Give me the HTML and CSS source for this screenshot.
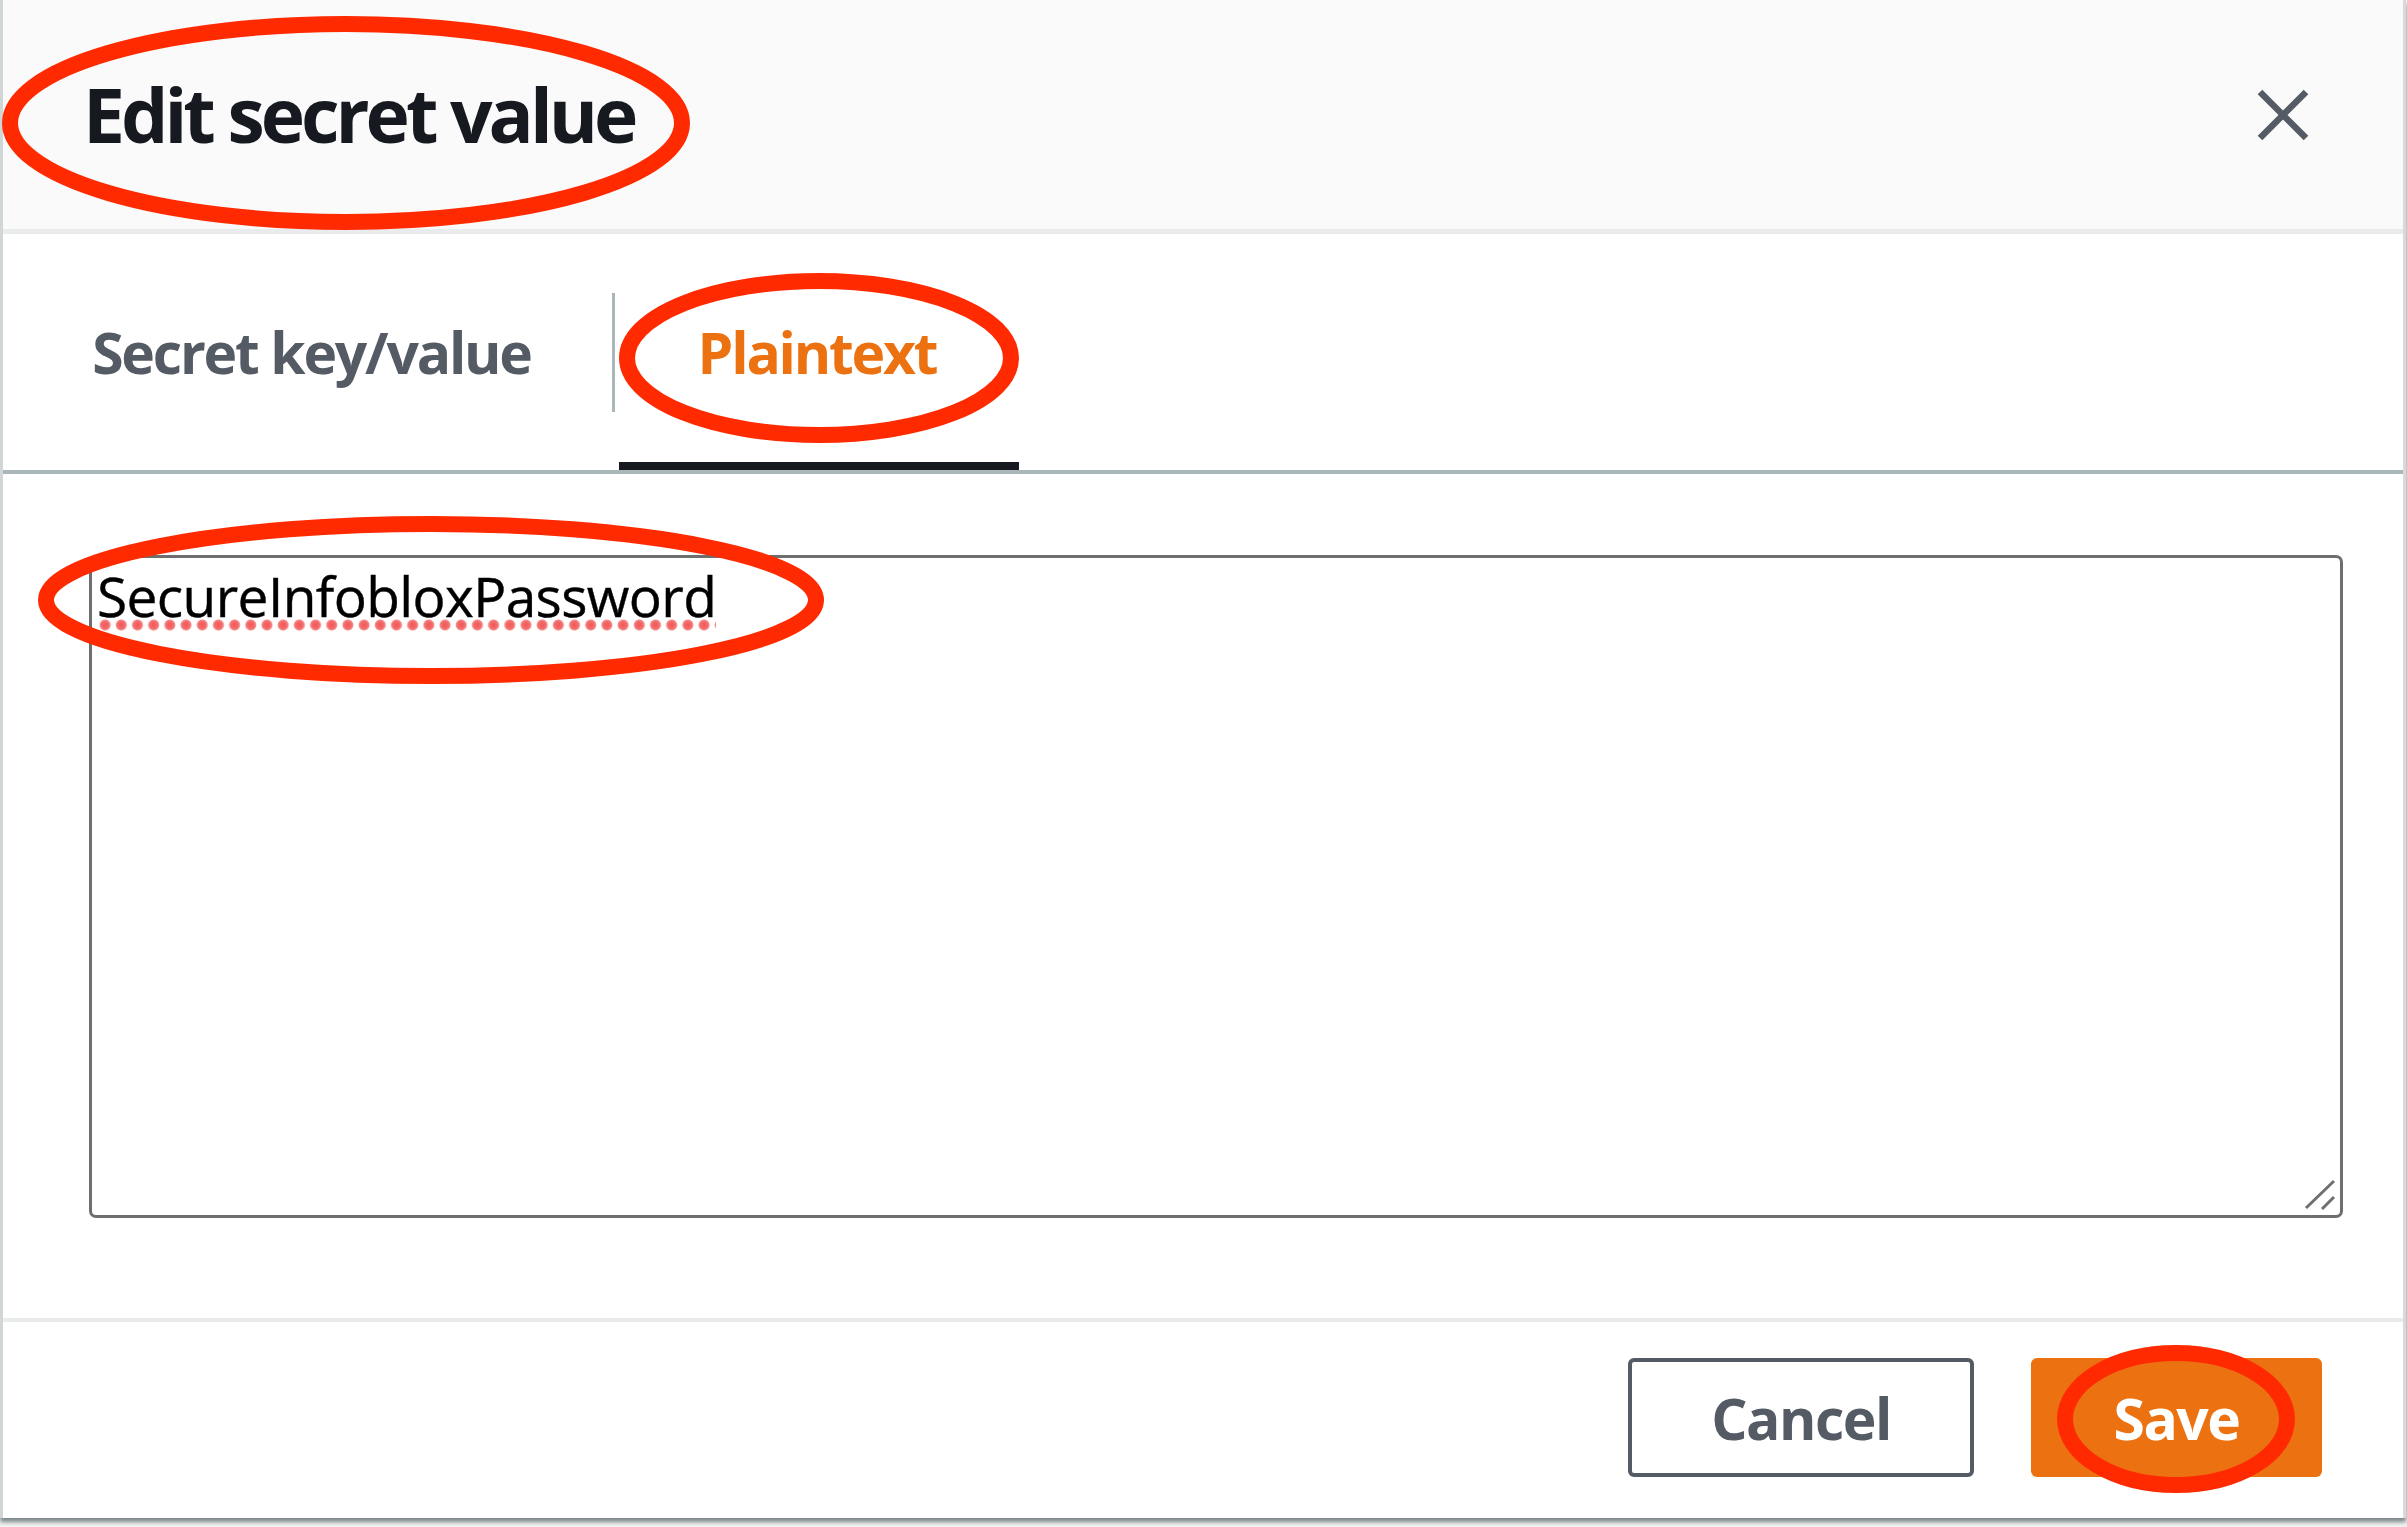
FILE: index.html
```html
<!DOCTYPE html>
<html lang="en">
<head>
<meta charset="utf-8">
<title>Edit secret value</title>
<link rel="stylesheet" href="styles.css">
</head>
<body>
<div class="dialog">
  <div class="header">
    <h2 class="title">Edit secret value</h2>
    <button class="close" aria-label="Close">
      <svg width="52" height="52" viewBox="0 0 52 52"><path d="M3 3 L49 49 M49 3 L3 49" stroke="#545b64" stroke-width="6.5" fill="none"/></svg>
    </button>
  </div>
  <div class="tabs">
    <div class="tab tab-kv">Secret key/value</div>
    <div class="tab-sep"></div>
    <div class="tab tab-plain active">Plaintext</div>
  </div>
  <div class="content">
    <div class="textarea">
      <span class="misspelled">SecureInfobloxPassword</span>
      <svg class="grip" width="32" height="32" viewBox="0 0 32 32"><path d="M2 29 L30 2 M18 30 L30 18" stroke="#707070" stroke-width="3" fill="none"/></svg>
    </div>
  </div>
  <div class="footer">
    <button class="btn btn-cancel">Cancel</button>
    <button class="btn btn-save">Save</button>
  </div>
</div>
<svg class="annotations" width="2407" height="1527" viewBox="0 0 2407 1527">
  <ellipse cx="346" cy="123" rx="336" ry="99"/>
  <ellipse cx="819" cy="358" rx="192" ry="77"/>
  <ellipse cx="431" cy="600" rx="385" ry="76"/>
  <ellipse cx="2176" cy="1419" rx="111" ry="66"/>
</svg>
</body>
</html>
```
FILE: styles.css
```css
html, body {
  margin: 0;
  padding: 0;
}
body {
  background: #f2f3f3;
  font-family: "Open Sans", "Noto Sans", sans-serif;
  width: 2407px;
  height: 1527px;
  position: relative;
  overflow: hidden;
}
.dialog {
  width: 2400px;
  background: #ffffff;
  border-left: 3px solid #d0d6d6;
  border-right: 3px solid #d5dbdb;
  box-shadow: 0 4px 4px rgba(84, 100, 102, 0.75);
  display: flex;
  flex-direction: column;
}
.header {
  height: 229px;
  background: #fafafa;
  border-bottom: 5px solid #e9ebed;
  display: flex;
  align-items: center;
  justify-content: space-between;
  padding: 0 94px 0 80px;
}
.title {
  margin: 0;
  font-size: 75px;
  font-weight: 700;
  color: #16191f;
  letter-spacing: -4px;
  line-height: 1;
}
.close {
  border: 0;
  background: transparent;
  padding: 0;
  width: 52px;
  height: 52px;
  display: flex;
}
.tabs {
  height: 236px;
  border-bottom: 4px solid #aab7b8;
  display: flex;
  align-items: center;
  padding-left: 8px;
}
.tab {
  height: 100%;
  display: flex;
  align-items: center;
  justify-content: center;
  font-size: 57px;
  font-weight: 700;
  letter-spacing: -2.2px;
  color: #545b64;
  position: relative;
  box-sizing: border-box;
}
.tab-kv {
  width: 601px;
}
.tab-sep {
  width: 3px;
  height: 119px;
  background: #aab7b8;
}
.tab-plain {
  width: 404px;
  color: #ec7211;
}
.tab.active::after {
  content: "";
  position: absolute;
  left: 4px;
  right: 0;
  bottom: 0;
  height: 8px;
  background: #16191f;
}
.content {
  padding: 81px 0 100px 86px;
  border-bottom: 4px solid #e9ebed;
}
.textarea {
  width: 2254px;
  height: 663px;
  box-sizing: border-box;
  border: 3px solid #6e6e6e;
  border-radius: 7px;
  padding: 0 5px;
  position: relative;
  font-family: "Open Sans", "Noto Sans", sans-serif;
  font-size: 55px;
  line-height: 75px;
  color: #000000;
  letter-spacing: -0.6px;
  -webkit-text-stroke: 0.4px #000000;
}
.misspelled {
  display: inline-block;
  line-height: 75px;
  background-image: radial-gradient(circle at center, #f25858 0, #f36a6a 3.5px, #f58c8c 5px, rgba(255,255,255,0) 6px);
  background-size: 16.2px 12px;
  background-repeat: repeat-x;
  background-position: 0 61px;
}
.grip {
  position: absolute;
  right: 4px;
  bottom: 4px;
}
.footer {
  display: flex;
  justify-content: flex-end;
  gap: 57px;
  padding: 36px 81px 41px 0;
}
.btn {
  height: 119px;
  box-sizing: border-box;
  font-family: "Open Sans", "Noto Sans", sans-serif;
  font-size: 57px;
  font-weight: 700;
  letter-spacing: -1.5px;
  border-radius: 6px;
  display: flex;
  align-items: center;
  justify-content: center;
  padding: 0;
}
.btn-cancel {
  width: 346px;
  background: #ffffff;
  border: 4px solid #545b64;
  color: #545b64;
}
.btn-save {
  width: 291px;
  background: #ec7211;
  border: 0;
  color: #ffffff;
}
.annotations {
  position: absolute;
  left: 0;
  top: 0;
  pointer-events: none;
}
.annotations ellipse {
  fill: none;
  stroke: #ff2a00;
  stroke-width: 16;
}
```
